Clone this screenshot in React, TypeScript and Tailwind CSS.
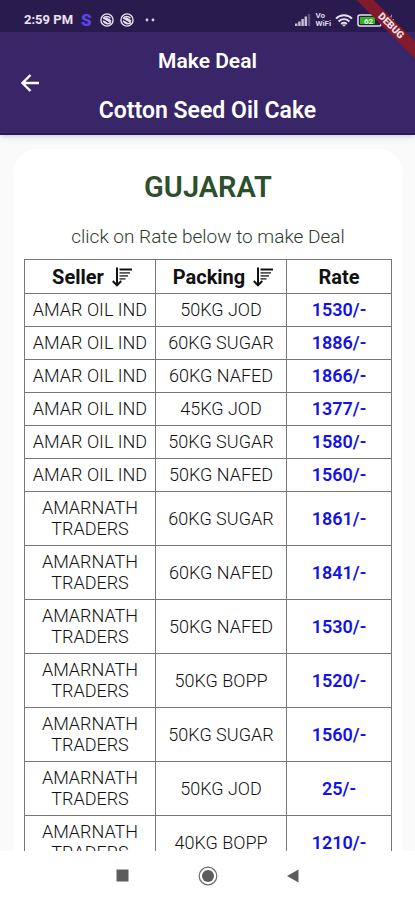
import { useState } from 'react';

interface Deal {
  seller: string;
  packing: string;
  rate: number;
}

type SortKey = 'seller' | 'packing';

const DEALS: Deal[] = [
  { seller: 'AMAR OIL IND', packing: '50KG JOD', rate: 1530 },
  { seller: 'AMAR OIL IND', packing: '60KG SUGAR', rate: 1886 },
  { seller: 'AMAR OIL IND', packing: '60KG NAFED', rate: 1866 },
  { seller: 'AMAR OIL IND', packing: '45KG JOD', rate: 1377 },
  { seller: 'AMAR OIL IND', packing: '50KG SUGAR', rate: 1580 },
  { seller: 'AMAR OIL IND', packing: '50KG NAFED', rate: 1560 },
  { seller: 'AMARNATH TRADERS', packing: '60KG SUGAR', rate: 1861 },
  { seller: 'AMARNATH TRADERS', packing: '60KG NAFED', rate: 1841 },
  { seller: 'AMARNATH TRADERS', packing: '50KG NAFED', rate: 1530 },
  { seller: 'AMARNATH TRADERS', packing: '50KG BOPP', rate: 1520 },
  { seller: 'AMARNATH TRADERS', packing: '50KG SUGAR', rate: 1560 },
  { seller: 'AMARNATH TRADERS', packing: '50KG JOD', rate: 25 },
  { seller: 'AMARNATH TRADERS', packing: '40KG BOPP', rate: 1210 },
];

function SwirlIcon() {
  return (
    <svg viewBox="0 0 14 14" className="size-3.5" fill="none" stroke="#e4e0ee">
      <circle cx="7" cy="7" r="6.1" strokeWidth="1.4" />
      <path d="M3.4 5.2C5 3 8.4 3 10.4 5.2" strokeWidth="1.5" />
      <path d="M3.2 4.8L11 9.4M5.6 4.6l5.4 3.2" strokeWidth="1.4" />
      <path d="M3.2 7.6c1 3.2 5 4 7.4 2M3.4 8.2l3.8 2" strokeWidth="1.5" />
    </svg>
  );
}

function SortIcon() {
  return (
    <svg viewBox="0 0 20 20" className="size-5" fill="none" stroke="#111">
      <path d="M5 0.5V18M0.8 14L5 18.4L9.2 14" strokeWidth="2" />
      <path d="M7.5 2.5H20" strokeWidth="2" />
      <path d="M7.5 5.8H18M7.5 8.8h8.5M7.5 11.8h6" strokeWidth="1.8" stroke="#555" />
    </svg>
  );
}

function StatusBar() {
  return (
    <div className="flex h-8 shrink-0 items-center bg-[#2a1b4f] pt-2 pr-4 pl-6 text-white">
      <span className="text-[13px] leading-4 font-bold text-[#e8e4f0]">2:59 PM</span>
      <span className="ml-2 text-[17px] leading-4 font-black text-[#5a43e8]">S</span>
      <div className="ml-2 flex items-center gap-1.5">
        <SwirlIcon />
        <SwirlIcon />
      </div>
      <svg viewBox="0 0 12 4" className="ml-2.5 h-1 w-3" fill="#d8d3e6">
        <circle cx="3" cy="2" r="1.4" />
        <circle cx="9" cy="2" r="1.4" />
      </svg>
      <div className="ml-auto flex items-center gap-1">
        <svg viewBox="0 0 16 12" className="h-3 w-4" fill="#c9c3d8">
          <path d="M0 9.5h2.4V12H0zM3.2 7.5h2.4V12H3.2zM6.4 5h2.4v7H6.4zM9.6 2.5H12V12H9.6z" />
          <path d="M12.8 0h2.4v12h-2.4z" fill="#5d5179" />
        </svg>
        <span className="flex flex-col text-[8px] leading-2 font-bold text-[#dcd7e8]">
          <span>Vo</span>
          <span>WiFi</span>
        </span>
        <svg viewBox="0 0 18 13" className="h-[13px] w-[18px]" fill="none" stroke="#e4e0ee" strokeWidth="2">
          <path d="M1 4.6c4.6-4.4 11.4-4.4 16 0M3.6 7.4c3.2-2.9 7.6-2.9 10.8 0M6.2 10c1.8-1.5 3.8-1.5 5.6 0" />
          <path d="M7 10.4L9 12.8l2-2.4z" fill="#e4e0ee" stroke="none" />
        </svg>
        <svg viewBox="0 0 42 13" className="h-[13px] w-[42px]">
          <rect x="1" y="1" width="23" height="11" rx="2" fill="#2a1b4f" stroke="#e4e0ee" strokeWidth="1.5" />
          <rect x="3" y="3" width="15" height="7" fill="#34b31d" />
          <text x="7" y="9.5" fontSize="8" fontWeight="700" fontFamily="Roboto" fill="#e9f7e6">62</text>
          <path d="M25.5 4H27v5h-1.5z" fill="#e4e0ee" />
          <path d="M35 0l-4 7h3l-1 6 4-8h-3z" fill="#e4e0ee" />
        </svg>
      </div>
    </div>
  );
}

function DebugBanner() {
  return (
    <div className="pointer-events-none absolute top-0 right-0 z-20 size-16 overflow-hidden">
      <div className="absolute top-5 -right-6 w-24 rotate-45 bg-[#831a2c] text-center text-[10px] leading-3 font-black text-[#eee2e8]">
        DEBUG
      </div>
    </div>
  );
}

function Header() {
  return (
    <header className="relative z-10 grid shrink-0 grid-cols-[60px_1fr_60px] items-center border-b-2 border-[#2a1763] bg-[#382668] text-white shadow-md">
      <button type="button" aria-label="Back" className="flex justify-center">
        <svg viewBox="0 0 18 18" className="size-[18px]" fill="none" stroke="currentColor" strokeWidth="2.4">
          <path d="M18 9H2M9.5 1L1.5 9l8 8" />
        </svg>
      </button>
      <div className="flex flex-col items-center gap-[22px] pt-[15px] pb-2 text-center font-semibold">
        <h1 className="text-[21px] leading-7">Make Deal</h1>
        <p className="text-[23px] leading-7 whitespace-nowrap">Cotton Seed Oil Cake</p>
      </div>
    </header>
  );
}

function NavBar() {
  return (
    <nav className="flex h-[49px] shrink-0 items-center justify-center gap-[65px] bg-white">
      <button type="button" aria-label="Recent apps">
        <svg viewBox="0 0 20 20" className="size-5" fill="#5c5c5c">
          <path d="M3.5 3.5h12v12h-12z" />
        </svg>
      </button>
      <button type="button" aria-label="Home">
        <svg viewBox="0 0 20 20" className="size-5">
          <circle cx="10" cy="10" r="8.8" fill="none" stroke="#6a6a6a" strokeWidth="1.2" />
          <circle cx="10" cy="10" r="6" fill="#5c5c5c" />
        </svg>
      </button>
      <button type="button" aria-label="Back to previous app">
        <svg viewBox="0 0 20 20" className="size-5" fill="#5c5c5c">
          <path d="M15.5 3.5v13L4 10z" />
        </svg>
      </button>
    </nav>
  );
}

export default function App() {
  const [sortKey, setSortKey] = useState<SortKey | null>(null);

  const deals = sortKey
    ? [...DEALS].sort((a, b) => a[sortKey].localeCompare(b[sortKey]))
    : DEALS;

  return (
    <div className="relative flex h-screen flex-col overflow-hidden bg-[#fafafa] font-[Roboto,sans-serif]">
      <StatusBar />
      <DebugBanner />
      <Header />

      <main className="min-h-0 flex-1 overflow-hidden pt-3.5 pr-3 pl-[13px]">
        <section className="rounded-t-3xl bg-white px-[11px] pt-5 text-center">
          <h2 className="text-[29px] leading-9 font-semibold text-[#2d4f2b]">GUJARAT</h2>
          <p className="mt-5 mb-2.5 text-[19px] leading-6 font-light text-[#2f3b2f]">click on Rate below to make Deal</p>

          <table className="w-full table-fixed border-collapse text-lg leading-[21px] text-[#111]">
            <colgroup>
              <col className="w-[131px]" />
              <col className="w-[131px]" />
              <col />
            </colgroup>
            <thead>
              <tr className="h-[34px] text-xl font-semibold">
                <th className="border border-[#777] pl-1">
                  <button type="button" onClick={() => setSortKey('seller')} className="inline-flex items-center gap-2">
                    Seller <SortIcon />
                  </button>
                </th>
                <th className="border border-[#777] pl-1">
                  <button type="button" onClick={() => setSortKey('packing')} className="inline-flex items-center gap-2">
                    Packing <SortIcon />
                  </button>
                </th>
                <th className="border border-[#777]">Rate</th>
              </tr>
            </thead>
            <tbody>
              {deals.map((deal) => (
                <tr key={`${deal.seller}-${deal.packing}`}>
                  <td className="border border-[#777] px-1 pt-[5px] pb-1.5 font-light">{deal.seller}</td>
                  <td className="border border-[#777] px-1 pt-[5px] pb-1.5 font-light">{deal.packing}</td>
                  <td className="border border-[#777] pt-[5px] pb-1.5 font-semibold text-[#1212e6]">
                    <button type="button">{deal.rate}/-</button>
                  </td>
                </tr>
              ))}
            </tbody>
          </table>
        </section>
      </main>

      <NavBar />
    </div>
  );
}
